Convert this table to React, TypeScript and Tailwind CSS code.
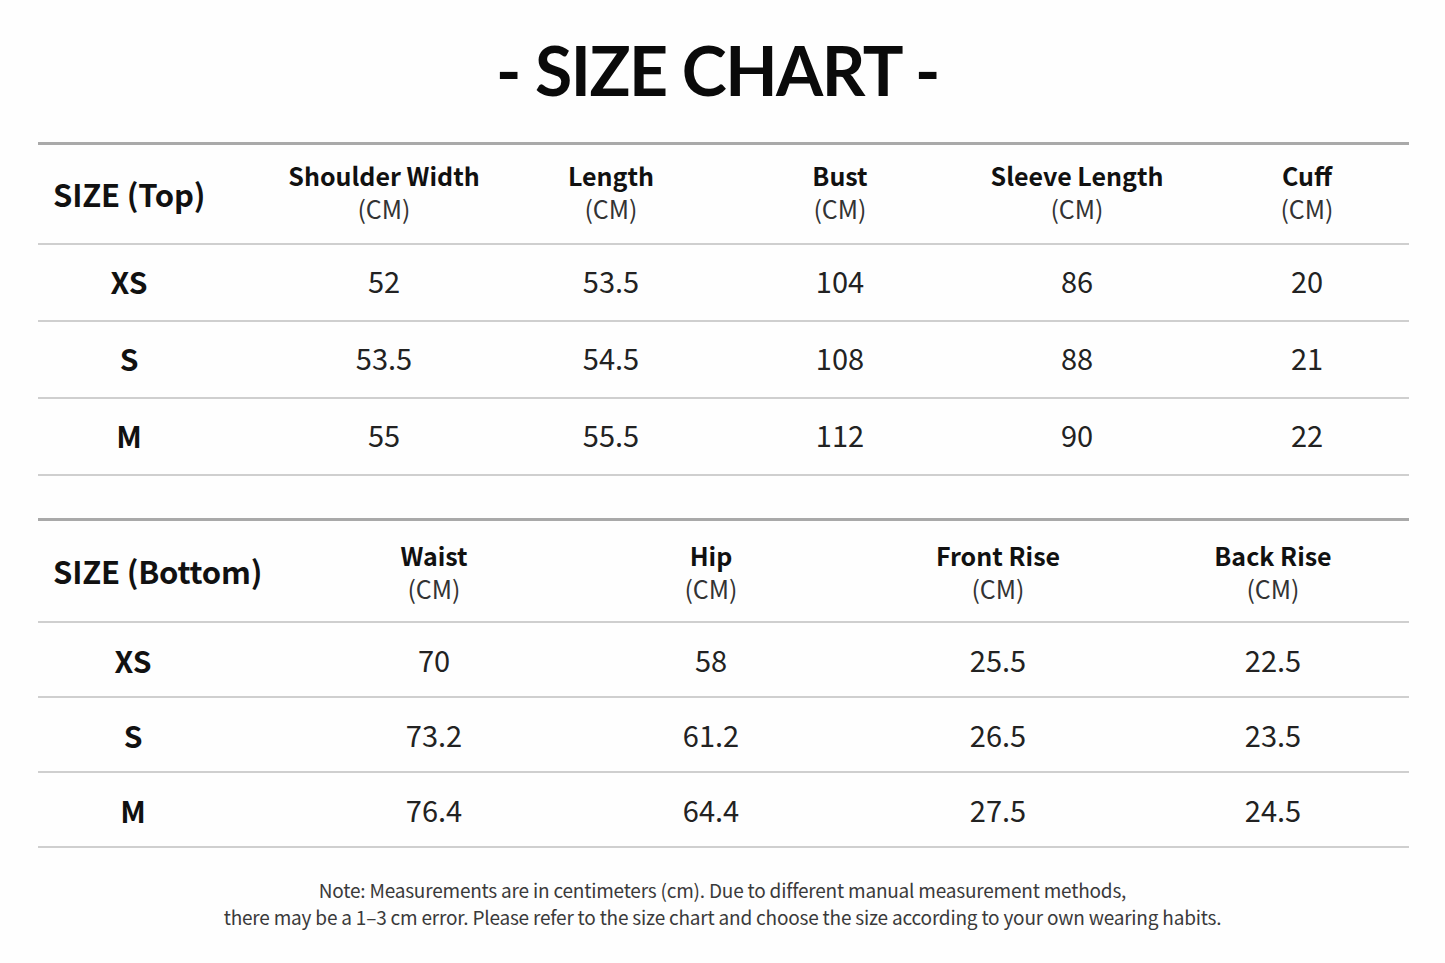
import React from "react";

type Col = { w: string; title: string };

const topCols: Col[] = [
  { w: "w-[214px]", title: "Shoulder Width" },
  { w: "w-[240px]", title: "Length" },
  { w: "w-[218px]", title: "Bust" },
  { w: "w-[256px]", title: "Sleeve Length" },
  { w: "w-[204px]", title: "Cuff" },
];
const topRows = [
  ["XS", "52", "53.5", "104", "86", "20"],
  ["S", "53.5", "54.5", "108", "88", "21"],
  ["M", "55", "55.5", "112", "90", "22"],
];

const botCols: Col[] = [
  { w: "w-[258px]", title: "Waist" },
  { w: "w-[296px]", title: "Hip" },
  { w: "w-[278px]", title: "Front Rise" },
  { w: "w-[272px]", title: "Back Rise" },
];
const botRows = [
  ["XS", "70", "58", "25.5", "22.5"],
  ["S", "73.2", "61.2", "26.5", "23.5"],
  ["M", "76.4", "64.4", "27.5", "24.5"],
];

function Table({
  label,
  firstW,
  firstInner,
  cols,
  rows,
  headH,
  rowH,
  headPad,
  rowPad,
}: {
  label: string;
  firstW: string;
  firstInner: string;
  cols: Col[];
  rows: string[][];
  headH: string;
  rowH: string;
  headPad: string;
  rowPad: string;
}) {
  return (
    <div className="ml-[38px] w-[1371px] border-t-[3px] border-[#a9a9a9]">
      <div className={`flex border-b-2 border-[#cfcfcf] ${headH}`}>
        <div className={`flex items-center pl-[15px] ${firstW}`}>
          <span className="text-[31px] font-bold text-[#111] tracking-[-0.2px]">{label}</span>
        </div>
        {cols.map((c) => (
          <div
            key={c.title}
            className={`flex flex-col items-center justify-center text-[25px] leading-[33px] text-[#111] ${headPad} ${c.w}`}
          >
            <span className="font-bold">{c.title}</span>
            <span className="text-[#333]">(CM)</span>
          </div>
        ))}
      </div>
      {rows.map((r) => (
        <div key={r[0]} className={`flex border-b-2 border-[#cfcfcf] ${rowH}`}>
          <div className={`flex items-center ${rowPad} ${firstW}`}>
            <div className={`text-center text-[30px] font-bold text-[#111] ${firstInner}`}>{r[0]}</div>
          </div>
          {cols.map((c, i) => (
            <div
              key={c.title}
              className={`flex items-center justify-center text-[29px] text-[#222] ${rowPad} ${c.w}`}
            >
              {r[i + 1]}
            </div>
          ))}
        </div>
      ))}
    </div>
  );
}

export default function App() {
  return (
    <div className="w-[1445px] h-[963px] bg-[#fefefe] overflow-hidden font-['Noto_Sans_CJK_SC','Noto_Sans',sans-serif]">
      <div className="h-[142px] flex items-center justify-center">
        <h1 className="text-[68px] font-bold text-[#0a0a0a] tracking-[-1.5px] leading-none pb-[2px] pr-[10px] font-['Lato','Noto_Sans',sans-serif]">
          - SIZE CHART -
        </h1>
      </div>
      <Table
        label="SIZE (Top)"
        firstW="w-[239px]"
        firstInner="w-[182px]"
        cols={topCols}
        rows={topRows}
        headH="h-[100px]"
        rowH="h-[77px]"
        headPad="pb-[4px]"
        rowPad="pb-[3px]"
      />
      <div className="h-[42px]" />
      <Table
        label="SIZE (Bottom)"
        firstW="w-[267px]"
        firstInner="w-[190px]"
        cols={botCols}
        rows={botRows}
        headH="h-[102px]"
        rowH="h-[75px]"
        headPad="pt-[2px]"
        rowPad="pt-[1px]"
      />
      <div className="pt-[28px] text-center text-[19px] leading-[27px] text-[#3a3a3a] tracking-[-0.2px]">
        <p>Note: Measurements are in centimeters (cm). Due to different manual measurement methods,</p>
        <p>
          there may be a 1–3 cm error. Please refer to the size chart and choose the size according to your own
          wearing habits.
        </p>
      </div>
    </div>
  );
}
